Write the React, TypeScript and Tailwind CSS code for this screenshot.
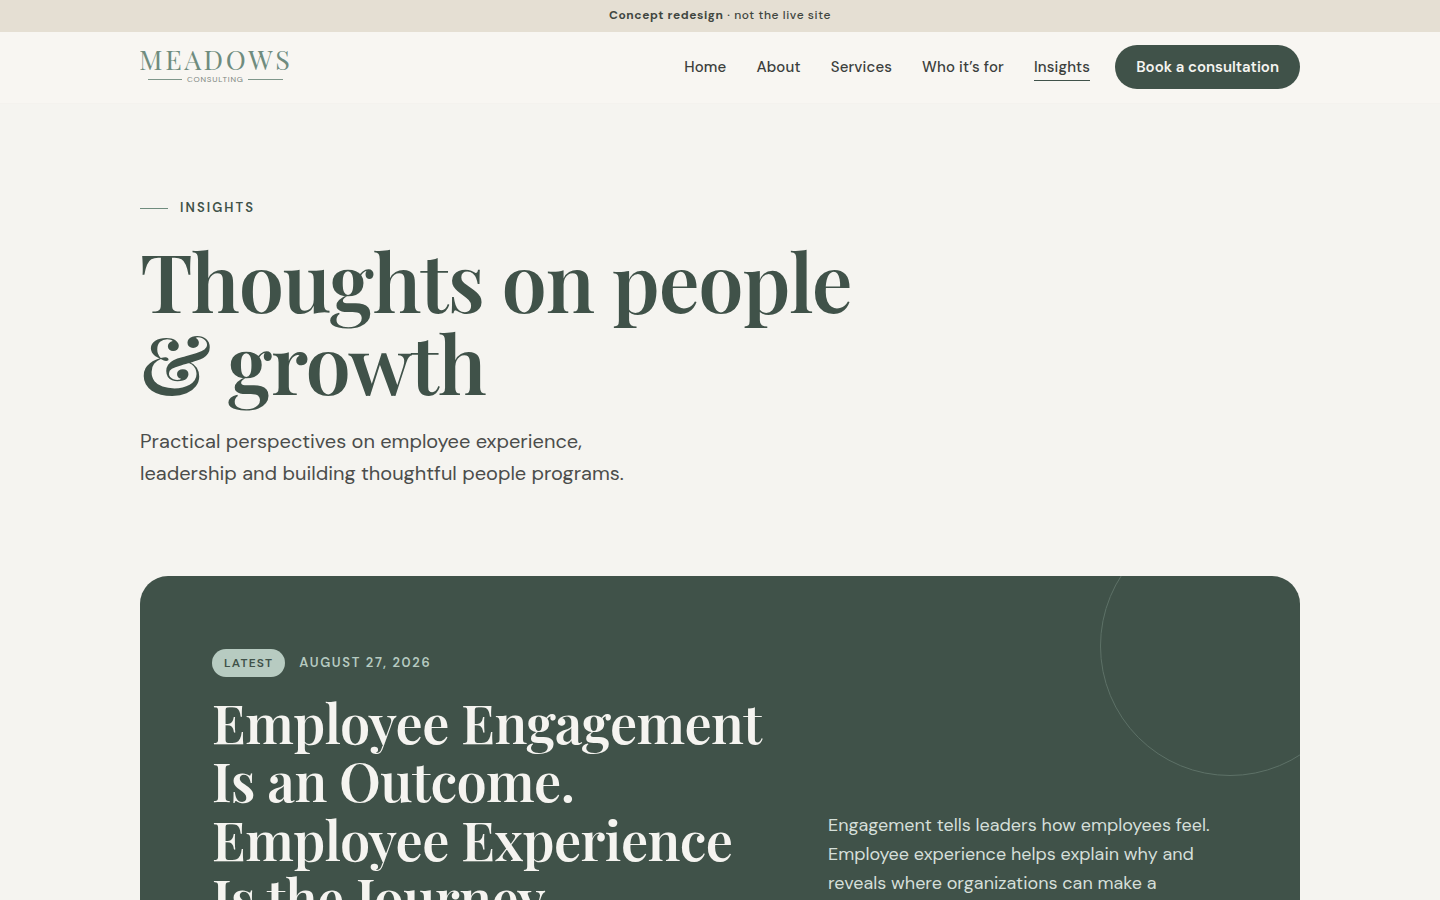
import React from "react";

const navLinks = [
  { label: "Home", href: "#home" },
  { label: "About", href: "#about" },
  { label: "Services", href: "#services" },
  { label: "Who it’s for", href: "#who" },
  { label: "Insights", href: "#insights", active: true },
];

function Logo() {
  return (
    <a href="#home" aria-label="Meadows Consulting">
      <svg width="156" height="44" viewBox="0 0 156 44" fill="none">
        <text x="-1" y="25" fill="#6f8c7e" fontFamily="'Playfair Display', 'Liberation Serif', serif" fontSize="27" letterSpacing="2.7">
          MEADOWS
        </text>
        <path d="M8 34.5H42M108 34.5H143" stroke="#7f978b" />
        <text x="47" y="37" fill="#7c8580" fontFamily="'DM Sans', 'Liberation Sans', sans-serif" fontSize="8" letterSpacing="0.8">
          CONSULTING
        </text>
      </svg>
    </a>
  );
}

function Header() {
  return (
    <header className="bg-[#f8f6f2] border-b border-[#f4f2ee] sticky top-0 z-50">
      <div className="max-w-[1208px] mx-auto px-6 pt-[13px] pb-[14px] flex items-center justify-between">
        <Logo />
        <nav className="flex items-center gap-[25px]">
          <div className="flex items-center gap-[30px] text-[15px] font-medium tracking-[0.01em] text-[#3c3f3d]">
            {navLinks.map((link) => (
              <a
                key={link.label}
                href={link.href}
                aria-current={link.active ? "page" : undefined}
                className={link.active ? "border-y border-t-transparent border-b-[#40524a] py-[2px]" : "py-[3px]"}
              >
                {link.label}
              </a>
            ))}
          </div>
          <a href="#book" className="flex items-center h-11 px-[21px] rounded-full bg-[#405249] text-[15px] font-semibold text-[#f5f4f0]">
            Book a consultation
          </a>
        </nav>
      </div>
    </header>
  );
}

function Hero() {
  return (
    <section className="max-w-[1208px] mx-auto px-6 pt-[94px] pb-[87px]">
      <div className="flex items-center gap-3 text-[13px] leading-5 font-semibold tracking-[0.16em] text-[#405249]">
        <span className="w-7 h-px bg-[#6f8c7e]" />
        INSIGHTS
      </div>
      <h1 className="mt-5 font-['Playfair_Display','Liberation_Serif',serif] font-semibold text-[81px] leading-[82px] tracking-[-0.015em] text-[#405249]">
        Thoughts on people
        <br />
        &amp; growth
      </h1>
      <p className="mt-[23px] text-xl leading-8 text-[#4b4d4b]">
        Practical perspectives on employee experience,
        <br />
        leadership and building thoughtful people programs.
      </p>
    </section>
  );
}

function FeaturedPost() {
  return (
    <section className="max-w-[1208px] mx-auto px-6 pb-24">
      <article className="relative overflow-hidden rounded-[28px] bg-[#405249] px-[72px] pt-[73px] pb-[72px] grid grid-cols-[1.4fr_1fr] gap-14 items-end">
        <div className="absolute -top-[60px] -right-[60px] size-[260px] rounded-full border border-[#5d7167]" />
        <div>
          <div className="flex items-center gap-[14px] text-[13px] font-semibold">
            <span className="rounded-full bg-[#b7cbc1] px-3 py-1 text-xs leading-5 tracking-[0.1em] text-[#405249]">LATEST</span>
            <time dateTime="2026-08-27" className="tracking-[0.13em] text-[#b7cbc1]">
              AUGUST 27, 2026
            </time>
          </div>
          <h2 className="mt-4 whitespace-nowrap font-['Playfair_Display','Liberation_Serif',serif] font-semibold text-[54px] leading-[1.08] tracking-[-0.01em] text-[#f5f4f0]">
            Employee Engagement
            <br />
            Is an Outcome.
            <br />
            Employee Experience
            <br />
            Is the Journey.
          </h2>
        </div>
        <p className="pb-7 text-lg leading-[29px] text-[#d5dfd9]">
          Engagement tells leaders how employees feel.
          <br />
          Employee experience helps explain why and
          <br />
          reveals where organizations can make a
        </p>
      </article>
    </section>
  );
}

export default function App() {
  return (
    <div className="min-h-screen bg-[#f5f4f0] font-['DM_Sans',Inter,sans-serif]">
      <div className="bg-[#e5dfd3] pt-[5px] pb-[7px] text-center text-xs leading-5 font-medium tracking-[0.05em] text-[#40463f]">
        <strong className="font-bold">Concept redesign</strong> · not the live site
      </div>
      <Header />
      <main>
        <Hero />
        <FeaturedPost />
      </main>
    </div>
  );
}
